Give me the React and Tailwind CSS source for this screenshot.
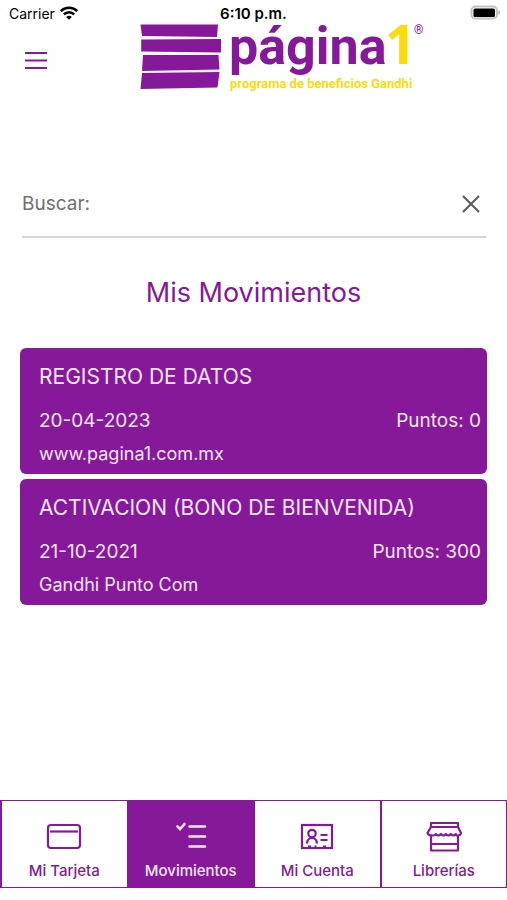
import React from "react";

const movements = [
  { title: "REGISTRO DE DATOS", date: "20-04-2023", points: 0, place: "www.pagina1.com.mx" },
  { title: "ACTIVACION (BONO DE BIENVENIDA)", date: "21-10-2021", points: 300, place: "Gandhi Punto Com" },
];

function WifiIcon() {
  return (
    <svg className="h-4 w-5" viewBox="0 0 20 16" aria-hidden="true" fill="none" stroke="#000" strokeWidth="2.6">
      <path d="M1.8 5.200a11.6 11.6 0 0 1 16.4 0" />
      <path d="M4.9 8.400a7.2 7.2 0 0 1 10.2 0" />
      <path d="M7.2 11a4 4 0 0 1 5.6 0L10 13.800z" fill="#000" stroke="none" />
    </svg>
  );
}

function BatteryIcon() {
  return (
    <svg className="h-4 w-8" viewBox="0 0 32 16" aria-hidden="true">
      <rect x="1.500" y="2.500" width="25.500" height="12" rx="4" fill="#fff" stroke="#c4c4c4" strokeWidth="2" />
      <rect x="3.500" y="4.500" width="21.500" height="8.500" rx="1.500" fill="#000" />
      <path d="M28.500 6q3 2.500 0 5z" fill="#a3a3a3" />
    </svg>
  );
}

function Logo() {
  return (
    <svg className="h-[72px] w-[288px] overflow-visible" viewBox="0 0 288 72" role="img" aria-label="página1">
      <g fill="#86189a">
        <path d="M.5.500 78 .5 77 13 2 12z" />
        <path d="M1.200 15.500 81 15V28.500L1.200 27.500z" />
        <path d="M3 31 78.500 31 79.500 45.500 2 47z" />
        <path d="M2 49 79.500 48 77.500 63.500 .5 65z" />
      </g>
      <text x="89" y="40" fill="#86189a" fontFamily="Roboto, sans-serif" fontWeight="700" fontSize="52">página</text>
      <text x="245" y="40" fill="#fbdc0a" fontFamily="'Noto Sans', sans-serif" fontWeight="700" fontSize="54">1</text>
      <text x="274" y="10" fill="#86189a" fontFamily="Roboto, sans-serif" fontSize="12">®</text>
      <text x="90" y="64" fill="#fbdc0a" fontFamily="Roboto, sans-serif" fontWeight="700" fontSize="13">programa de beneficios Gandhi</text>
    </svg>
  );
}

function CardIcon() {
  return (
    <svg className="size-9" viewBox="0 0 36 36" fill="none" stroke="currentColor" strokeWidth="2.200" aria-hidden="true">
      <rect x="2" y="7" width="32" height="23" rx="3" />
      <path d="M4 13.500h28" />
    </svg>
  );
}

function ChecklistIcon() {
  return (
    <svg className="size-9" viewBox="0 0 36 36" fill="none" stroke="currentColor" strokeWidth="2.600" strokeLinecap="round" aria-hidden="true">
      <path d="M4.500 8.500l2.500 2.500 4.500-5" />
      <path d="M16.500 8.500H32M16.500 18.500H32M16.500 28.500H32" />
    </svg>
  );
}

function IdIcon() {
  return (
    <svg className="size-9" viewBox="0 0 36 36" fill="none" stroke="currentColor" strokeWidth="2.200" aria-hidden="true">
      <rect x="3" y="7" width="30" height="23" />
      <circle cx="13" cy="15.500" r="3.700" />
      <path d="M8 25.500c.3-3.500 2-5.500 5-5.500s4.700 2 5 5.500" />
      <path d="M21.500 17h7M21.500 22h7" />
      <path d="M9 29h3M15.500 29h2M24 29h3" strokeWidth="3" />
    </svg>
  );
}

function StoreIcon() {
  return (
    <svg className="size-9" viewBox="0 0 36 36" fill="none" stroke="currentColor" strokeWidth="2.200" strokeLinejoin="round" aria-hidden="true">
      <path d="M5 9V5h27v4" />
      <path d="M5 9h27l3 6q-.5 2.500-3 2.500-2 0-2.200-1.500-1.200 1.500-2.500 1.500t-2.500-1.500q-1.200 1.500-2.500 1.500t-2.500-1.500q-1.200 1.500-2.500 1.500t-2.500-1.500q-1.200 1.500-2.500 1.500t-2.500-1.500q-.8 1.500-2.500 1.500Q2 17.500 1.500 15z" />
      <path d="M5 17.500v15h27v-15M5 26h27" />
    </svg>
  );
}

const tabs = [
  { label: "Mi Tarjeta", Icon: CardIcon },
  { label: "Movimientos", Icon: ChecklistIcon, active: true },
  { label: "Mi Cuenta", Icon: IdIcon },
  { label: "Librerías", Icon: StoreIcon },
];

export default function App() {
  return (
    <div className="flex min-h-screen flex-col bg-white font-['Inter',sans-serif]">
      <div className="grid h-6 grid-cols-3 items-end px-[9px] text-black">
        <div className="flex items-center gap-1 text-sm">
          <span>Carrier</span>
          <WifiIcon />
        </div>
        <div className="text-center text-[15px] leading-5 font-semibold">6:10 p.m.</div>
        <div className="-mr-1 flex justify-end pb-1">
          <BatteryIcon />
        </div>
      </div>

      <header className="flex items-center">
        <button type="button" aria-label="Menú" className="ml-6 flex h-6 w-6 items-center text-[#86189a]">
          <svg className="size-6" viewBox="0 0 24 24" stroke="currentColor" strokeWidth="2" aria-hidden="true">
            <path d="M1 5h22M1 12.500h22M1 20h22" />
          </svg>
        </button>
        <div className="flex flex-1 justify-center pl-3">
          <Logo />
        </div>
      </header>

      <main className="flex-1 px-5 pt-20">
        <div className="mr-px ml-0.5 flex h-[62px] items-center justify-between border-b-2 border-[#d6d6d6] pb-1">
          <input
            type="text"
            aria-label="Buscar"
            placeholder="Buscar:"
            className="min-w-0 flex-1 text-[19px] leading-7 text-[#707070] outline-none placeholder:text-[#707070]"
          />
          <button type="button" aria-label="Borrar" className="mr-[3px] text-[#606060]">
            <svg className="size-6" viewBox="0 0 24 24" stroke="currentColor" strokeWidth="2.200" aria-hidden="true">
              <path d="M4 4l16 16M20 4L4 20" />
            </svg>
          </button>
        </div>

        <h1 className="mt-[35px] text-center text-[27px] leading-10 text-[#86189a]">Mis Movimientos</h1>

        <ul className="mt-[35px] flex flex-col gap-[5px]">
          {movements.map((m) => (
            <li key={m.title} className="rounded-md bg-[#86189a] pt-[11px] pr-1.5 pb-[5px] pl-[19px] text-[#fbe6ff]">
              <h2 className="text-[21px] leading-9">{m.title}</h2>
              <div className="mt-2 flex justify-between text-[19px] leading-9">
                <span>{m.date}</span>
                <span>Puntos: {m.points}</span>
              </div>
              <p className="text-lg leading-[30px]">{m.place}</p>
            </li>
          ))}
        </ul>
      </main>

      <nav className="mb-3 grid grid-cols-4 border-y border-r border-[#86189a]">
        {tabs.map(({ label, Icon, active }) => (
          <button
            key={label}
            type="button"
            aria-current={active ? "page" : undefined}
            className={
              "flex h-[86px] flex-col items-center border-l-2 border-[#86189a] pt-[17px] text-[15px] leading-5 font-medium " +
              (active ? "bg-[#86189a] text-[#fbe6ff]" : "text-[#86189a]")
            }
          >
            <Icon />
            <span className="mt-[7px]">{label}</span>
          </button>
        ))}
      </nav>
    </div>
  );
}
